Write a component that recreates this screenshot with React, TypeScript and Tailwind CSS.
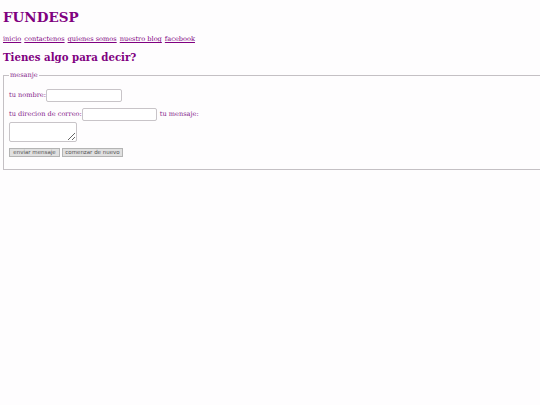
export default function App() {
  return (
    <div className="min-h-[405px] bg-[#fefdfe] px-[3px] pt-[7px] text-[#800080] [font-family:'DejaVu_Serif',serif]">
      <h1 className="text-[13.5px] leading-[20px] font-bold">FUNDESP</h1>
      <nav className="mt-[8px] flex gap-[3px] text-[6.6px] leading-[9px]">
        <a className="underline" href="#">inicio</a>
        <a className="underline" href="#">contactenos</a>
        <a className="underline" href="#">quienes somos</a>
        <a className="underline" href="#">nuestro blog</a>
        <a className="underline" href="#">facebook</a>
      </nav>
      <h2 className="mt-[5px] text-[10.2px] leading-[16px] font-bold">Tienes algo para decir?</h2>
      <fieldset className="mt-[6px] mr-[-20px] border border-[#c4c0c4] px-[5px] pb-[12px] pt-[4px] text-[6.6px] text-[#84228a]">
        <legend className="px-[1px] leading-[9px]">mesanje</legend>
        <div className="mt-[5px] flex items-center">
          <span>tu nombre:</span>
          <input className="h-[13px] w-[76px] rounded-[2px] border border-[#c8c4c8] bg-white" />
        </div>
        <div className="mt-[6px] flex items-center">
          <span>tu direcion de correo:</span>
          <input className="h-[13px] w-[75px] rounded-[2px] border border-[#c8c4c8] bg-white" />
          <span className="ml-[3px]">tu mensaje:</span>
        </div>
        <textarea className="mt-[1px] block h-[20px] w-[68px] rounded-[2px] border border-[#c8c4c8] bg-white" />
        <div className="mt-[6px] flex gap-[2px]">
          <button className="h-[9px] w-[51px] border border-[#b4b4b4] bg-[#e0e0e0] text-[5.5px] leading-[7px] text-[#555] [font-family:'DejaVu_Sans',sans-serif]">enviar mensaje</button>
          <button className="h-[9px] w-[61px] border border-[#b4b4b4] bg-[#e0e0e0] text-[5.5px] leading-[7px] text-[#555] [font-family:'DejaVu_Sans',sans-serif]">comenzar de nuevo</button>
        </div>
      </fieldset>
    </div>
  );
}
